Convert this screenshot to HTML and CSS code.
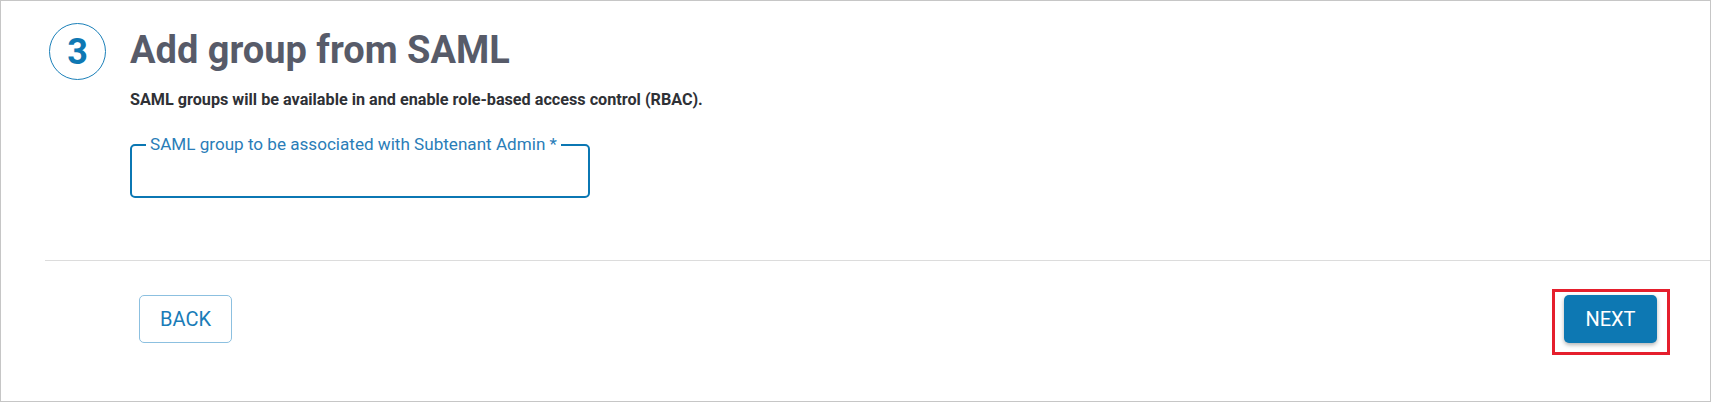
FILE: index.html
```html
<!DOCTYPE html>
<html lang="en">
<head>
<meta charset="utf-8">
<title>Add group from SAML</title>
<link rel="stylesheet" href="styles.css">
</head>
<body>
<div class="panel">
  <div class="header">
    <div class="step">3</div>
    <h1 class="title">Add group from SAML</h1>
  </div>
  <div class="content">
    <p class="subtitle">SAML groups will be available in and enable role-based access control (RBAC).</p>
    <div class="field">
      <label class="field-label">SAML group to be associated with Subtenant Admin *</label>
      <input class="field-input" type="text">
    </div>
  </div>
  <div class="divider"></div>
  <div class="actions">
    <button class="btn btn-back">BACK</button>
    <div class="next-wrap">
      <button class="btn btn-next">NEXT</button>
      <span class="highlight"></span>
    </div>
  </div>
</div>
</body>
</html>
```

FILE: styles.css
```css
* { box-sizing: border-box; }
html, body { margin: 0; padding: 0; background: #fff; }
body { font-family: Roboto, "Liberation Sans", Arial, sans-serif; }

.panel {
  width: 1711px;
  height: 402px;
  border: 1px solid #c6c6c6;
  background: #fff;
}

.header {
  display: flex;
  align-items: flex-start;
  padding: 22px 0 0 48px;
}

.step {
  width: 57px;
  height: 57px;
  border: 1px solid #1b80b9;
  border-radius: 50%;
  display: flex;
  align-items: center;
  justify-content: center;
  color: #0e78b3;
  font-weight: 700;
  font-size: 36px;
  line-height: 1;
}

.title {
  margin: 8px 0 0 24px;
  font-size: 38px;
  line-height: 38px;
  font-weight: 700;
  color: #575b69;
}

.content {
  padding-left: 129px;
}

.subtitle {
  margin: 10px 0 0 0;
  font-size: 16.2px;
  line-height: 20px;
  font-weight: 700;
  color: #2f3136;
}

.field {
  position: relative;
  margin-top: 34px;
  width: 460px;
  height: 54px;
  border: 2px solid #0b77b3;
  border-radius: 5px;
}

.field-label {
  position: absolute;
  left: 14px;
  top: -12px;
  padding: 0 4px;
  background: #fff;
  font-size: 17.1px;
  line-height: 20px;
  color: #2a7db8;
}

.field-input {
  width: 100%;
  height: 100%;
  border: 0;
  outline: none;
  background: transparent;
  padding: 0 16px;
  font: inherit;
}

.divider {
  margin: 62px 0 0 44px;
  height: 1px;
  background: #dcdcdc;
}

.actions {
  display: flex;
  justify-content: space-between;
  align-items: flex-start;
  padding: 34px 53px 0 138px;
}

.btn {
  width: 93px;
  height: 48px;
  border-radius: 5px;
  font-family: Roboto, "Liberation Sans", Arial, sans-serif;
  font-size: 20px;
  font-weight: 400;
  cursor: pointer;
  padding: 0;
}

.btn-back {
  background: #fff;
  border: 1px solid #8cc0e0;
  color: #1a7cb8;
}

.next-wrap {
  position: relative;
}

.btn-next {
  display: block;
  background: #0d78b3;
  border: 0;
  color: #fff;
  box-shadow: 0 2px 4px rgba(0, 0, 0, 0.3);
}

.highlight {
  position: absolute;
  left: -12px;
  top: -6px;
  right: -13px;
  bottom: -12px;
  border: 3px solid #e51f2d;
  pointer-events: none;
}
```
